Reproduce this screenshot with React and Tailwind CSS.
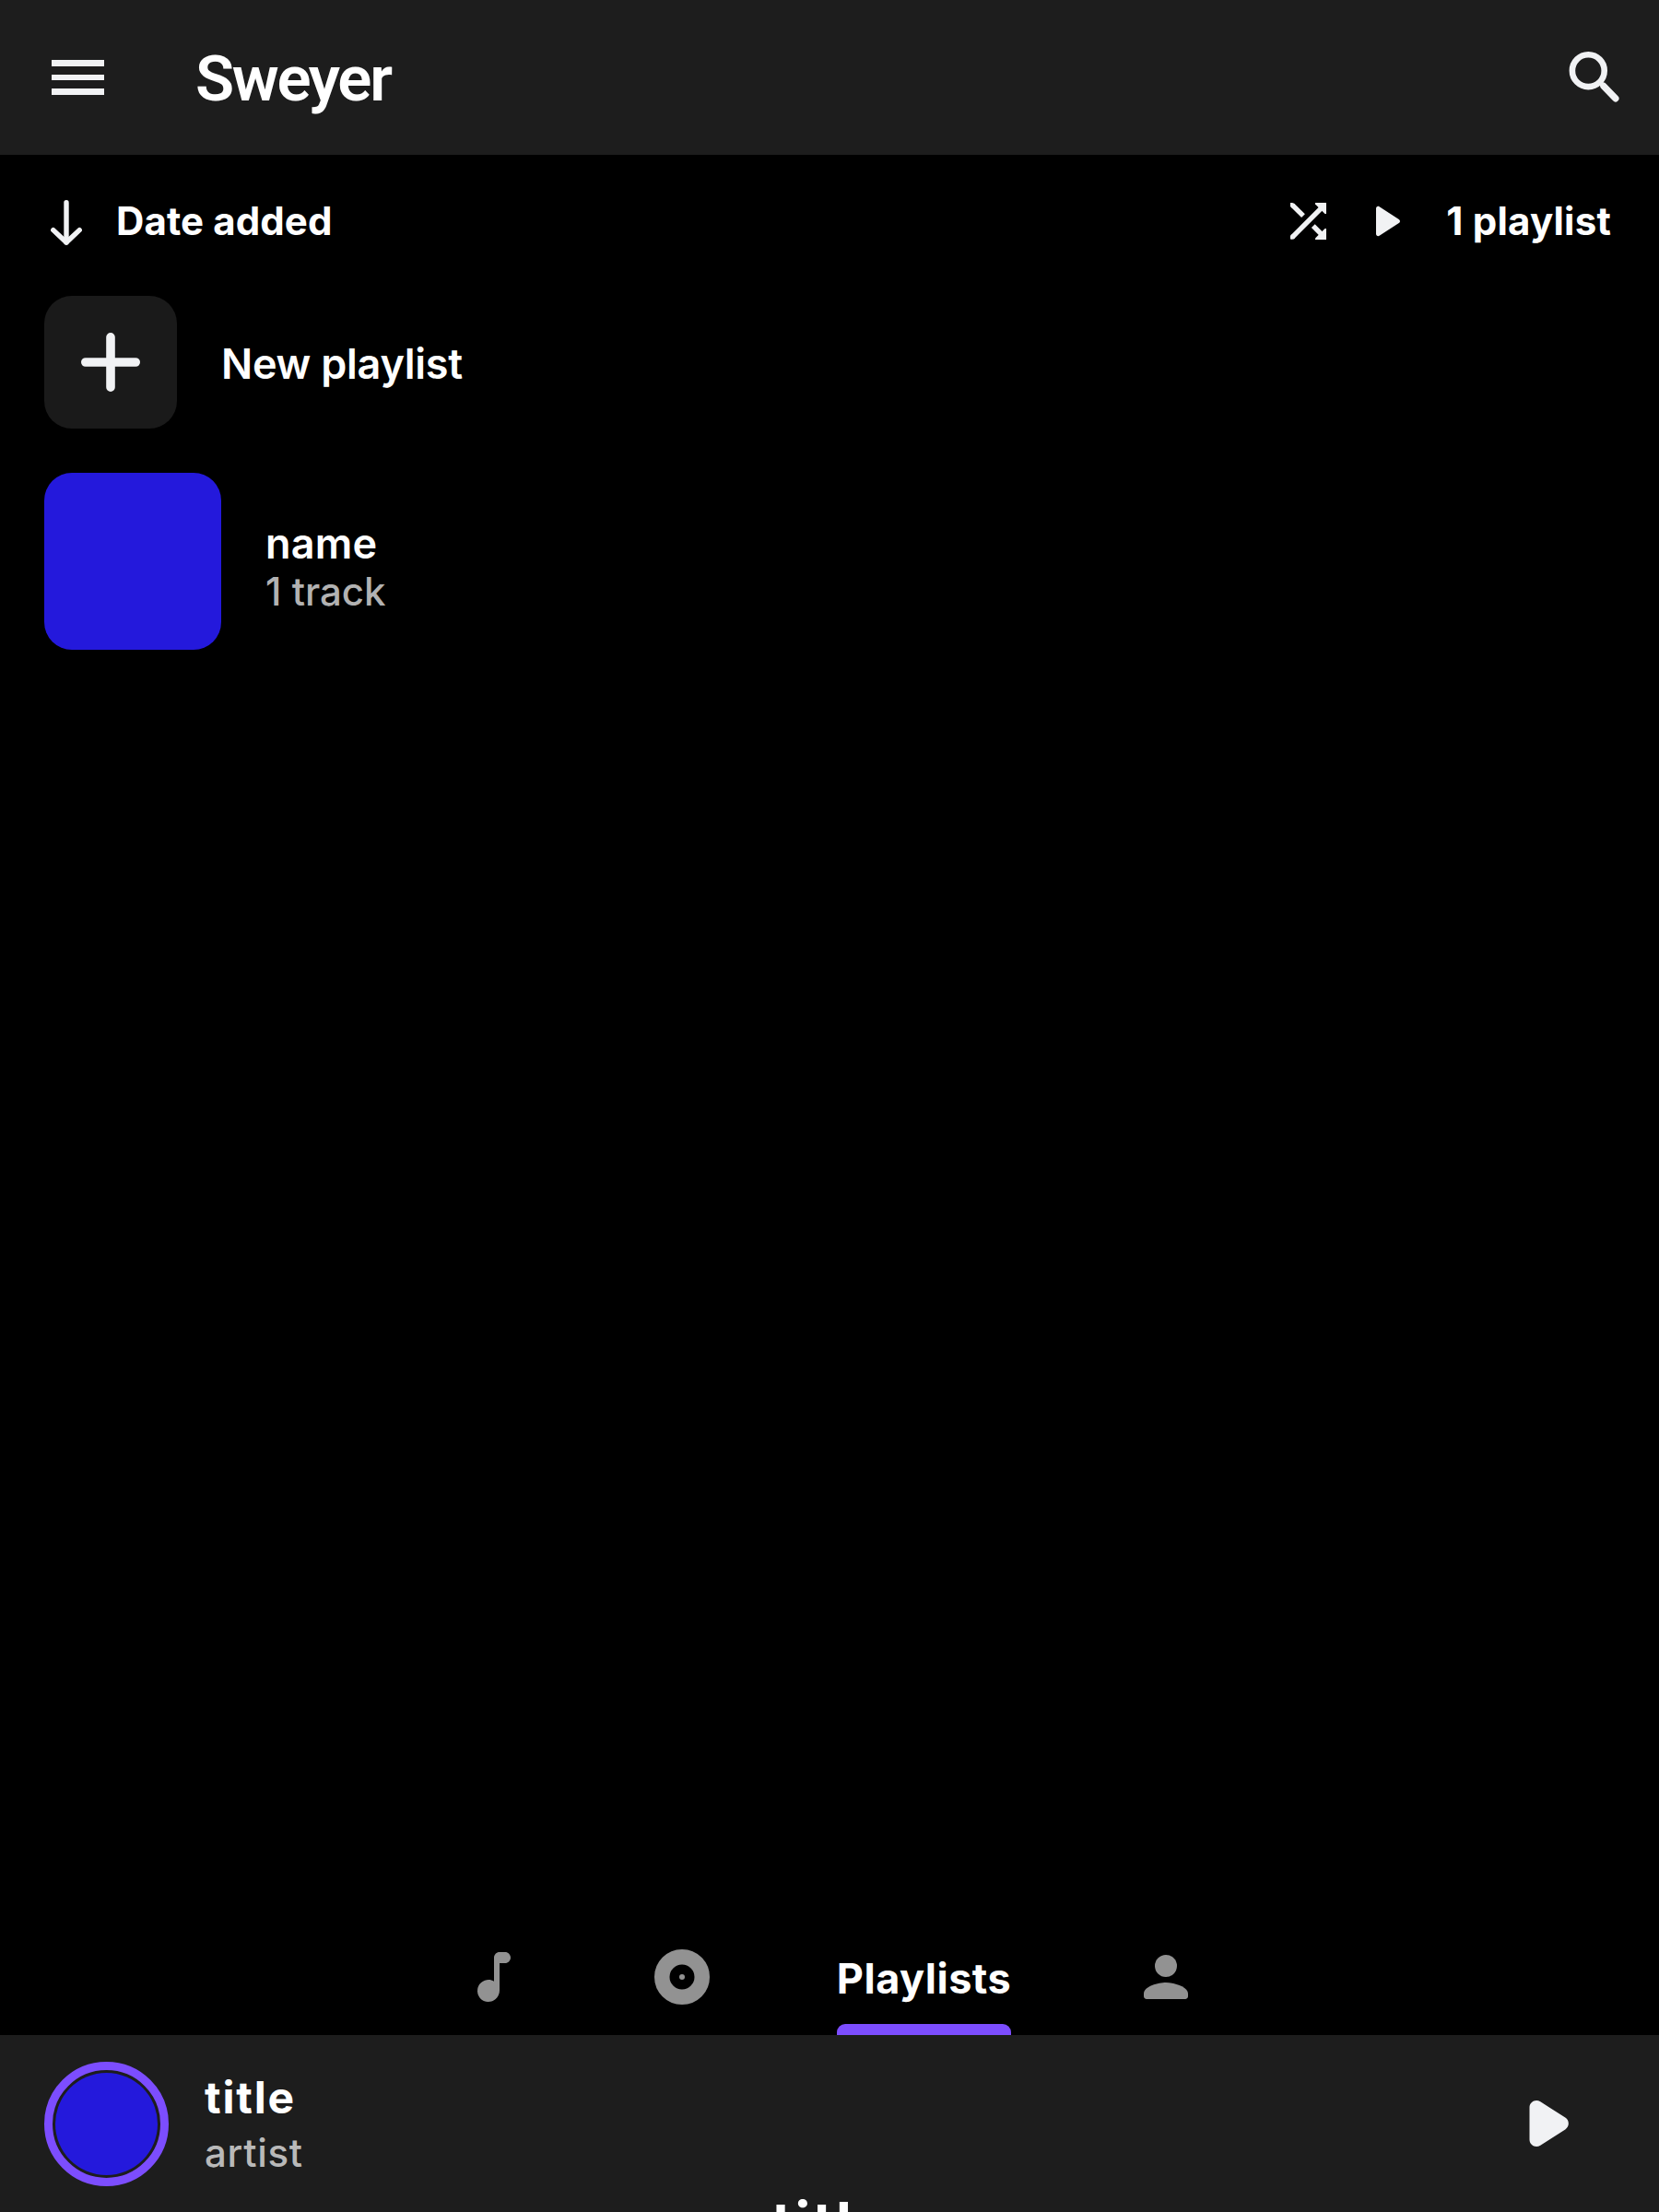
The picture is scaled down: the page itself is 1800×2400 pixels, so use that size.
function SearchIcon() {
  return (
    <svg className="h-[72px] w-[72px]" viewBox="0 0 72 72" fill="none" stroke="#f1f2f4" strokeLinecap="round">
      <circle cx="29.3" cy="28.7" r="17.4" strokeWidth="6.6" />
      <path d="M46 45.5 58.8 58.8" strokeWidth="7.4" />
      <path d="M42.2 41.6 50 49.4" strokeWidth="5" strokeLinecap="butt" />
    </svg>
  );
}

function ArrowDownIcon() {
  return (
    <svg className="h-[52px] w-12" viewBox="0 0 48 52" fill="none" stroke="#f1f2f4" strokeWidth="5.4" strokeLinecap="round" strokeLinejoin="round">
      <path d="M24 4.7V48" />
      <path d="M9.8 34.6 24 48 38.2 34.6" />
    </svg>
  );
}

function ShuffleIcon() {
  return (
    <svg className="h-12 w-12" viewBox="0 0 48 48" fill="none" stroke="#f1f2f4" strokeWidth="5.4">
      <path d="M6.6 6.9 18 18.2" />
      <path d="M6.6 40.8 38 9.4" />
      <path d="M28.8 29.2 38 38.4" />
      <g fill="#f1f2f4" stroke="none">
        <circle cx="6.5" cy="6.8" r="2.6" />
        <circle cx="6.5" cy="40.9" r="2.6" />
        <path d="M4 4h2.5v2.7H4zM4 41h2.5v2.6H4z" />
        <path d="M31 4h12v12h-1.5L31 5.5z" />
        <path d="M43 44H31v-1.5L41.5 32H43z" />
      </g>
    </svg>
  );
}

function SmallPlayIcon() {
  return (
    <svg className="h-12 w-12" viewBox="0 0 48 48" fill="#f1f2f4">
      <path d="M11 10.2v27.6c0 1.9 2 3 3.6 2l21.2-13.7c1.6-1 1.6-3.2 0-4.2L14.6 8.2c-1.6-1-3.600 0-3.600 2z" />
    </svg>
  );
}

function PlusIcon() {
  return (
    <svg className="h-[72px] w-[72px]" viewBox="0 0 72 72" stroke="#f1f2f4" strokeWidth="9.6" strokeLinecap="round">
      <path d="M36 8.8V63.2M8.8 36H63.2" />
    </svg>
  );
}

function NoteIcon() {
  return (
    <svg className="h-[72px] w-[72px]" viewBox="0 0 24 24" fill="#929292">
      <path d="M12 5v8.55c-.94-.54-2.1-.75-3.33-.32-1.34.48-2.37 1.67-2.61 3.07-.46 2.74 1.86 5.08 4.59 4.65 1.96-.31 3.35-2.11 3.35-4.1V7h2c1.1 0 2-.9 2-2s-.9-2-2-2h-2c-1.1 0-2 .9-2 2z" />
    </svg>
  );
}

function AlbumIcon() {
  return (
    <svg className="h-[72px] w-[72px]" viewBox="0 0 24 24" fill="#929292">
      <circle cx="12" cy="12" r="7.25" fill="none" stroke="#929292" strokeWidth="5.5" />
      <circle cx="12" cy="12" r="1" />
    </svg>
  );
}

function PersonIcon() {
  return (
    <svg className="h-[72px] w-[72px]" viewBox="0 0 24 24" fill="#929292">
      <circle cx="12" cy="8" r="4" />
      <path d="M12 14c-2.67 0-8 1.34-8 4v1c0 .55.45 1 1 1h14c.55 0 1-.45 1-1v-1c0-2.66-5.33-4-8-4z" />
    </svg>
  );
}

function PlayIcon() {
  return (
    <svg className="h-[72px] w-[72px]" viewBox="0 0 72 72" fill="#f1f2f4">
      <path d="M15.5 18.7v34.6c0 6.2 6.6 9.8 11.8 6.4l27-17.3c4.7-3.1 4.7-9.7 0-12.8L27.3 12.300c-5.200-3.400-11.800.2-11.800 6.400z" />
    </svg>
  );
}

function AppBar() {
  return (
    <header className="flex h-[168px] items-center justify-between bg-[#1d1d1d] pr-[34px] pl-14">
      <div className="flex items-center">
        <div className="flex w-[57px] flex-col gap-[9px]">
          <div className="h-[6.5px] bg-[#f1f2f4]" />
          <div className="h-[6.5px] bg-[#f1f2f4]" />
          <div className="h-[6.5px] bg-[#f1f2f4]" />
        </div>
        <h1 className="mt-[3px] ml-[99px] font-['Roboto',sans-serif] text-[69px] leading-[82px] font-semibold tracking-[-2.3px]">Sweyer</h1>
      </div>
      <SearchIcon />
    </header>
  );
}

function SortBar() {
  return (
    <div className="flex h-[153px] items-start justify-between pt-[47px] pr-[52px] pl-12 text-[42px] leading-[50px] font-bold">
      <div className="flex">
        <ArrowDownIcon />
        <span className="ml-[30px] tracking-[0.1px]">Date added</span>
      </div>
      <div className="flex">
        <div className="mt-px flex gap-[38px]">
          <ShuffleIcon />
          <SmallPlayIcon />
        </div>
        <span className="ml-[39px] tracking-[0.2px]">1 playlist</span>
      </div>
    </div>
  );
}

function Tabs() {
  return (
    <nav className="flex h-[126px] pl-[500px]">
      <div className="mt-[27px]"><NoteIcon /></div>
      <div className="mt-[27px] ml-[132px]"><AlbumIcon /></div>
      <div className="ml-[132px] flex w-[189px] flex-col items-center justify-between pt-[38px]">
        <span className="text-[45px] leading-[54px] font-bold tracking-[0.5px]">Playlists</span>
        <div className="h-3 w-full rounded-t-[9px] bg-[#7c4dff]" />
      </div>
      <div className="mt-[27px] ml-[132px]"><PersonIcon /></div>
    </nav>
  );
}

function PlayerPanel() {
  return (
    <footer className="h-48 overflow-hidden bg-[#1d1d1d]">
      <div className="flex h-48 items-center pr-[76px] pl-12">
        <div className="h-[135px] w-[135px] rounded-full border-[9px] border-[#7c4dff] p-[3px]">
          <div className="h-full w-full rounded-full bg-[#2419dc]" />
        </div>
        <div className="ml-[39px] flex flex-1 flex-col gap-[6px]">
          <span className="text-[48px] leading-[58px] font-bold tracking-[1.8px]">title</span>
          <span className="text-[42px] leading-[50px] font-medium tracking-[0.7px] text-[#b9b9b9]">artist</span>
        </div>
        <div className="mr-[8px]"><PlayIcon /></div>
      </div>
      <div className="-mt-[25px] pl-[3px] text-center text-[62px] leading-[74px] font-bold tracking-[2.5px]">title</div>
    </footer>
  );
}

export default function App() {
  return (
    <div className="flex h-[2400px] w-[1800px] flex-col overflow-hidden bg-black font-['Inter',sans-serif] text-white">
      <AppBar />
      <SortBar />
      <main className="flex flex-1 flex-col gap-12 pl-12">
        <div className="flex items-center">
          <div className="flex h-36 w-36 items-center justify-center rounded-[30px] bg-[#1a1a1a]">
            <PlusIcon />
          </div>
          <span className="mt-[3px] ml-12 text-[45px] leading-[54px] font-semibold tracking-[-0.25px]">New playlist</span>
        </div>
        <div className="flex items-center">
          <div className="h-48 w-48 rounded-[30px] bg-[#2419dc]" />
          <div className="mt-[12px] ml-12 flex flex-col">
            <span className="text-[45px] leading-[54px] font-semibold tracking-[0.2px]">name</span>
            <span className="text-[42px] leading-[50px] font-medium text-[#b2b2b2]">1 track</span>
          </div>
        </div>
      </main>
      <Tabs />
      <PlayerPanel />
    </div>
  );
}
